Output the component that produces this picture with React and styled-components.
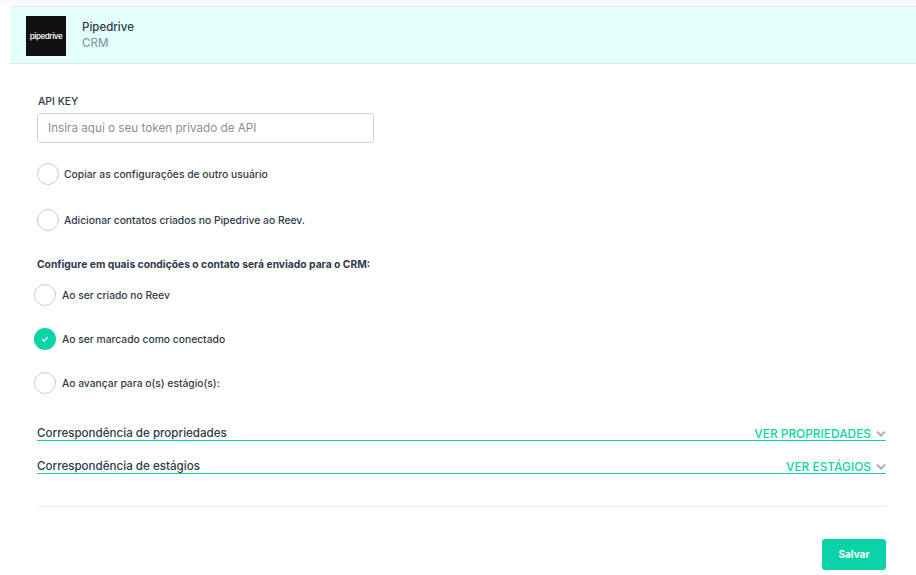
import React from "react";
import styled, { createGlobalStyle } from "styled-components";

const GlobalStyle = createGlobalStyle`
  html, body {
    margin: 0;
    padding: 0;
    background: #fff;
    font-family: "Inter", "Open Sans", "Liberation Sans", sans-serif;
  }
`;

const Page = styled.div`
  width: 916px;
  height: 575px;
  overflow: hidden;
`;

const TopStrip = styled.div`
  height: 6px;
  background: #fafafa;
`;

const Panel = styled.div`
  margin-left: 10px;
`;

const Header = styled.header`
  box-sizing: border-box;
  height: 58px;
  display: flex;
  align-items: center;
  gap: 16px;
  padding: 2px 0 0 16px;
  background: #e3fff9;
  border-top: 1px solid #e9eeec;
  border-bottom: 1px solid #d9e6e3;
`;

const Logo = styled.div`
  width: 40px;
  height: 40px;
  background: #111;
  color: #eeeeee;
  display: flex;
  align-items: center;
  justify-content: center;
  font-size: 8px;
  font-weight: 600;
  letter-spacing: -0.45px;
`;

const HeaderText = styled.div`
  display: flex;
  flex-direction: column;
  gap: 1px;
  margin-top: -2px;
`;

const Title = styled.div`
  font-size: 11.5px;
  line-height: 15px;
  font-weight: 500;
  color: #2f3a4a;
`;

const Subtitle = styled.div`
  font-size: 11.5px;
  line-height: 15px;
  font-weight: 500;
  color: #8a9bb0;
`;

const Body = styled.div`
  width: 849px;
  padding: 32px 0 0 27px;
`;

const FieldLabel = styled.div`
  font-size: 10.4px;
  line-height: 12px;
  font-weight: 500;
  color: #2f3a4a;
  padding-left: 1px;
`;

const TokenInput = styled.input`
  display: block;
  box-sizing: border-box;
  width: 337px;
  height: 30px;
  margin-top: 5px;
  padding: 0 10px;
  border: 1px solid #cfd3d8;
  border-radius: 3px;
  font-family: inherit;
  font-size: 11.7px;
  font-weight: 400;
  color: #2f3a4a;
  outline: none;

  &::placeholder {
    color: #8c8f94;
    opacity: 1;
  }
`;

const OptionRow = styled.label`
  display: flex;
  align-items: center;
  gap: ${(p) => p.$gap}px;
  height: 22px;
  margin-top: ${(p) => p.$top}px;
  margin-left: ${(p) => p.$left || 0}px;
  font-size: 10.3px;
  line-height: 20px;
  font-weight: 500;
  color: #2f3a4a;
`;

const Radio = styled.span`
  box-sizing: border-box;
  flex: none;
  width: 22px;
  height: 22px;
  border-radius: 50%;
  display: flex;
  align-items: center;
  justify-content: center;
  background: ${(p) => (p.$checked ? "#0bd3a5" : "#fff")};
  border: ${(p) => (p.$checked ? "none" : "1px solid #c9ced3")};
`;

const SectionHeading = styled.div`
  margin-top: 26px;
  font-size: 10.3px;
  line-height: 14px;
  font-weight: 700;
  color: #2f3a4a;
`;

const Accordion = styled.div`
  box-sizing: border-box;
  height: 26px;
  margin-top: ${(p) => p.$top}px;
  display: flex;
  align-items: flex-end;
  justify-content: space-between;
  border-bottom: 1px solid #0bd3a5;
`;

const AccordionTitle = styled.span`
  font-size: 11.6px;
  line-height: 13px;
  font-weight: 500;
  color: #2f3a4a;
`;

const AccordionAction = styled.span`
  display: flex;
  align-items: center;
  gap: 5px;
  font-size: 11.9px;
  line-height: 13px;
  font-weight: 500;
  color: #0bd3a5;
`;

const Divider = styled.hr`
  margin: 32px 0 0;
  border: 0;
  border-top: 1px solid #eaecee;
`;

const Footer = styled.div`
  display: flex;
  justify-content: flex-end;
  margin-top: 32px;
`;

const SaveButton = styled.button`
  width: 64px;
  height: 31px;
  padding: 0 0 2px;
  border: 0;
  border-radius: 3px;
  background: #0bd3a5;
  color: #fff;
  font-family: inherit;
  font-size: 10px;
  font-weight: 700;
`;

const Check = () => (
  <svg width="10" height="10" viewBox="0 0 10 10" fill="none">
    <path d="M2.2 5.2 4.2 7.1 7.8 3.2" stroke="#fff" strokeWidth="1.2" />
  </svg>
);

const Chevron = () => (
  <svg width="10" height="8" viewBox="0 0 10 8" fill="none">
    <path d="M1 1.6 5 5.6 9 1.6" stroke="#a5abb5" strokeWidth="2" />
  </svg>
);

export default function App() {
  return (
    <>
      <GlobalStyle />
      <Page>
        <TopStrip />
        <Panel>
          <Header>
            <Logo>pipedrive</Logo>
            <HeaderText>
              <Title>Pipedrive</Title>
              <Subtitle>CRM</Subtitle>
            </HeaderText>
          </Header>
          <Body>
            <FieldLabel>API KEY</FieldLabel>
            <TokenInput placeholder="Insira aqui o seu token privado de API" />
            <OptionRow $top={20} $gap={5}>
              <Radio />
              Copiar as configurações de outro usuário
            </OptionRow>
            <OptionRow $top={24} $gap={5}>
              <Radio />
              Adicionar contatos criados no Pipedrive ao Reev.
            </OptionRow>
            <SectionHeading>
              Configure em quais condições o contato será enviado para o CRM:
            </SectionHeading>
            <OptionRow $top={13} $left={-3} $gap={6}>
              <Radio />
              Ao ser criado no Reev
            </OptionRow>
            <OptionRow $top={22} $left={-3} $gap={6}>
              <Radio $checked>
                <Check />
              </Radio>
              Ao ser marcado como conectado
            </OptionRow>
            <OptionRow $top={22} $left={-3} $gap={6}>
              <Radio />
              Ao avançar para o(s) estágio(s):
            </OptionRow>
            <Accordion $top={21}>
              <AccordionTitle>Correspondência de propriedades</AccordionTitle>
              <AccordionAction>
                VER PROPRIEDADES <Chevron />
              </AccordionAction>
            </Accordion>
            <Accordion $top={7}>
              <AccordionTitle>Correspondência de estágios</AccordionTitle>
              <AccordionAction>
                VER ESTÁGIOS <Chevron />
              </AccordionAction>
            </Accordion>
            <Divider />
            <Footer>
              <SaveButton>Salvar</SaveButton>
            </Footer>
          </Body>
        </Panel>
      </Page>
    </>
  );
}
